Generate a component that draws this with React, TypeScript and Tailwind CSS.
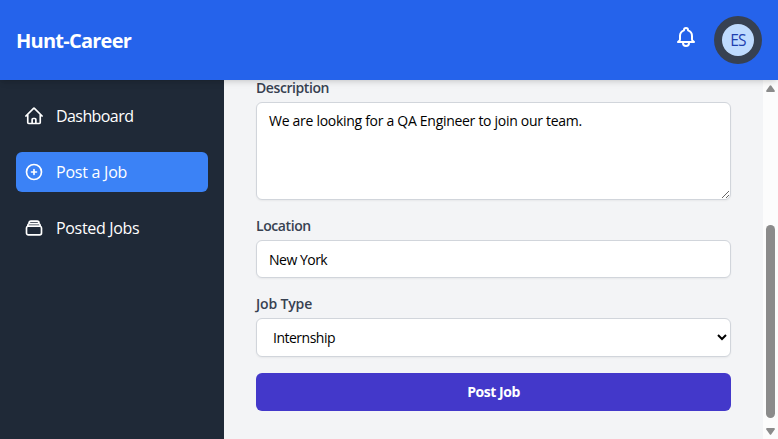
import React from 'react';
import { HiOutlineBell } from 'react-icons/hi';
import { HiOutlineHome, HiOutlinePlusCircle, HiOutlineRectangleStack } from 'react-icons/hi2';

const navItems = [
  { label: 'Dashboard', Icon: HiOutlineHome, active: false, tracking: 'tracking-[-0.58px]' },
  { label: 'Post a Job', Icon: HiOutlinePlusCircle, active: true, tracking: 'tracking-[-0.24px]' },
  { label: 'Posted Jobs', Icon: HiOutlineRectangleStack, active: false, tracking: 'tracking-[-0.32px]' },
];

const labelClass = 'block text-[14px] font-semibold text-[#374151]';
const fieldClass =
  'block w-full rounded-md border border-[#d1d5db] bg-white px-3 py-2 text-[14px] leading-5 text-black shadow-[0_1px_2px_rgba(0,0,0,0.05)] outline-none';

function Header() {
  return (
    <header className="relative z-10 flex h-20 shrink-0 items-center justify-between bg-[#2563eb] px-4 text-white shadow-[0_4px_6px_-1px_rgba(0,0,0,0.1),0_2px_4px_-2px_rgba(0,0,0,0.1)]">
      <h1 className="pt-0.5 text-[20px] leading-7 font-bold tracking-[-0.75px]">Hunt-Career</h1>
      <div className="flex items-center gap-4">
        <HiOutlineBell className="-mt-1.5 size-6" />
        <div className="flex size-12 items-center justify-center rounded-full bg-[#374151]">
          <span className="flex size-8 items-center justify-center rounded-full bg-[#bfdbfe] pt-0.5 text-[15.5px] tracking-[-0.8px] text-[#1e40af]">
            ES
          </span>
        </div>
      </div>
    </header>
  );
}

function Sidebar() {
  return (
    <aside className="flex w-56 shrink-0 flex-col gap-4 bg-[#1f2937] p-4 text-white">
      {navItems.map(({ label, Icon, active, tracking }) => (
        <a key={label} className={`flex h-10 items-center gap-3 rounded-md px-2 ${active ? 'bg-[#3b82f6]' : ''}`}>
          <Icon className="size-5 stroke-2" />
          <span className={`text-[16px] leading-6 ${tracking}`}>{label}</span>
        </a>
      ))}
    </aside>
  );
}

function ScrollBar() {
  return (
    <div className="flex w-[15px] shrink-0 flex-col items-center bg-[#fcfcfc] pt-[5px] pb-1">
      <svg className="h-[7px] w-[9px]" viewBox="0 0 9 7" fill="#8b8b8b">
        <path d="M3.7.7Q4.5-.3 5.3.7L8.7 5.5Q9.2 7 8 7H1Q-.2 7 .3 5.5Z" />
      </svg>
      <div className="mt-[133px] h-[193px] w-[9px] rounded-full bg-[#8b8b8b]" />
      <svg className="mt-auto h-[7px] w-[9px]" viewBox="0 0 9 7" fill="#8b8b8b">
        <path d="M3.7 6.3Q4.5 7.3 5.3 6.3L8.7 1.5Q9.2 0 8 0H1Q-.2 0 .3 1.5Z" />
      </svg>
    </div>
  );
}

export default function App() {
  return (
    <div className="flex h-screen w-full flex-col overflow-hidden bg-[#f3f4f6] font-['Segoe_UI','Open_Sans',sans-serif]">
      <Header />
      <div className="flex min-h-0 flex-1">
        <Sidebar />
        <main className="min-w-0 flex-1 px-8">
          <form className="flex flex-col gap-4">
            <div>
              <label className={`${labelClass} leading-4 tracking-[-0.42px]`}>Description</label>
              <textarea
                className={`${fieldClass} mt-1.5 h-[98px] tracking-[-0.29px]`}
                defaultValue="We are looking for a QA Engineer to join our team."
              />
            </div>
            <div>
              <label className={`${labelClass} leading-5 tracking-[-0.42px]`}>Location</label>
              <input className={`${fieldClass} mt-1 h-[38px] tracking-[-0.5px]`} defaultValue="New York" />
            </div>
            <div>
              <label className={`${labelClass} leading-5 tracking-[-0.15px]`}>Job Type</label>
              <select className={`${fieldClass} mt-1 h-[39px] tracking-[-0.5px]`}>
                <option>Internship</option>
              </select>
            </div>
            <button type="button" className="h-[38px] rounded-md bg-[#4338ca] text-[14px] leading-5 font-bold tracking-[-0.45px] text-white">
              Post Job
            </button>
          </form>
        </main>
        <ScrollBar />
      </div>
    </div>
  );
}
